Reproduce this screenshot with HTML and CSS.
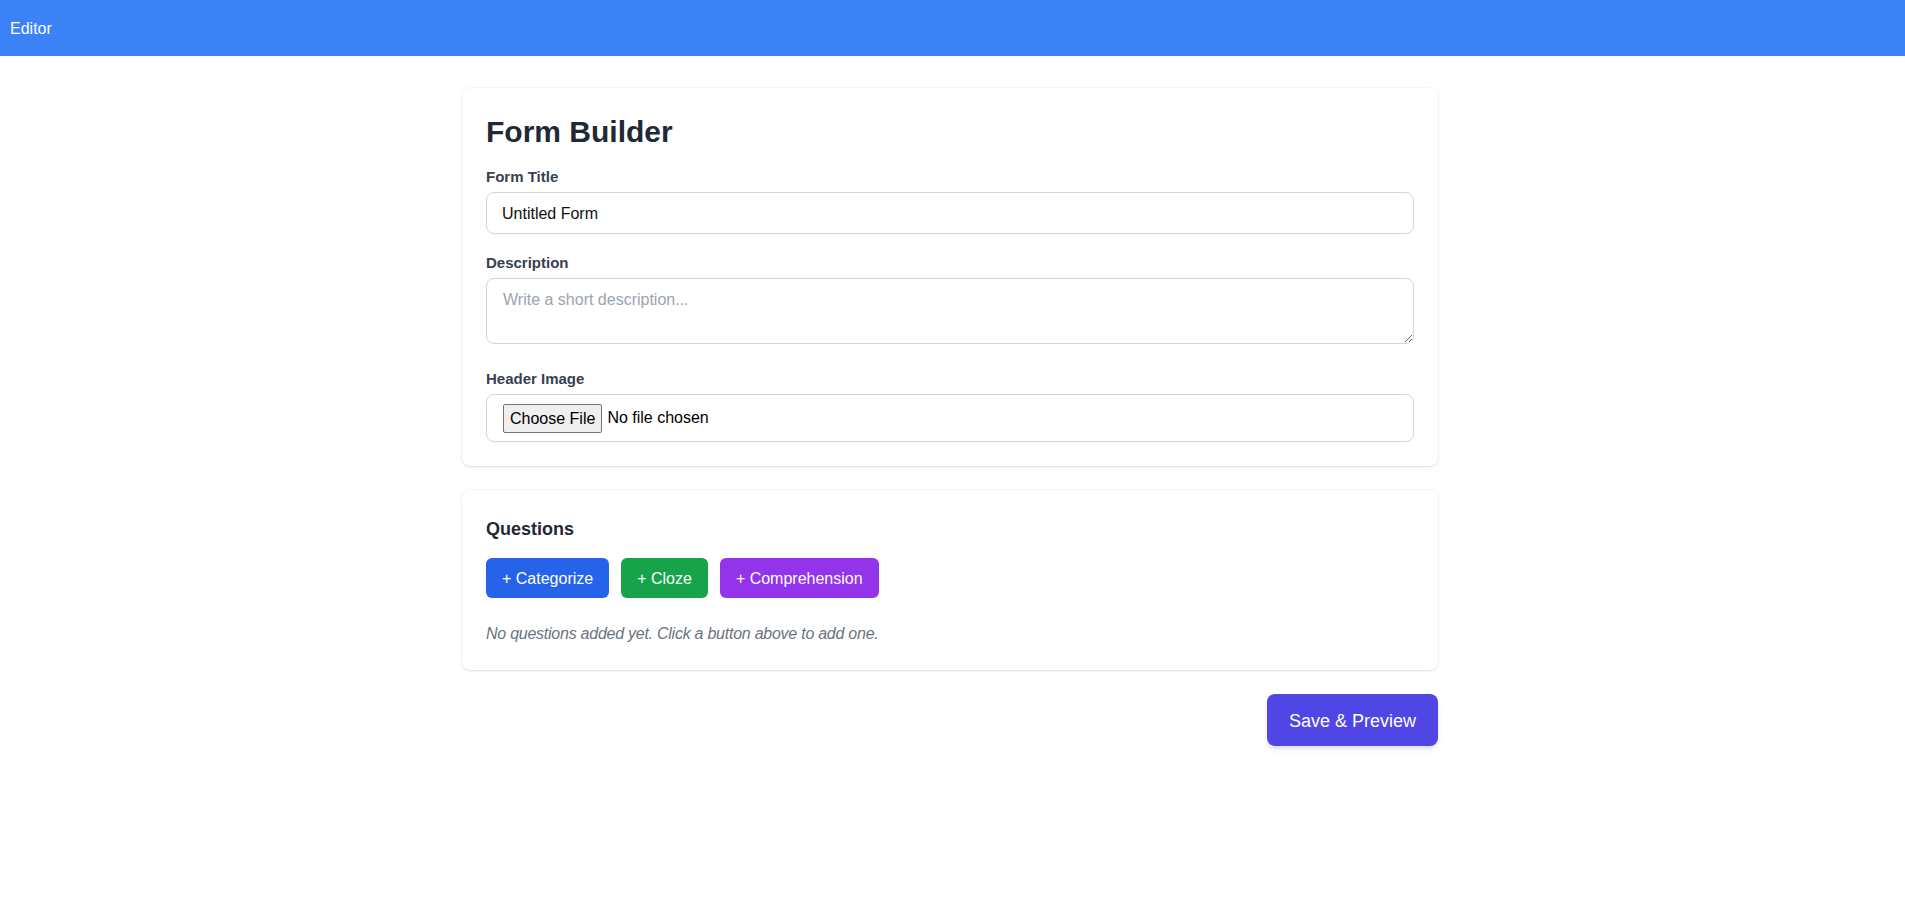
FILE: index.html
```html
<!DOCTYPE html>
<html lang="en">
<head>
<meta charset="utf-8">
<title>Editor</title>
<link rel="stylesheet" href="styles.css">
</head>
<body>
<header class="topbar">Editor</header>
<main class="page">
  <div class="container">
    <section class="card">
      <h1 class="title">Form Builder</h1>
      <div class="field">
        <label class="label" for="ftitle">Form Title</label>
        <input id="ftitle" class="input" type="text" value="Untitled Form">
      </div>
      <div class="field">
        <label class="label" for="fdesc">Description</label>
        <textarea id="fdesc" class="input textarea" rows="2" placeholder="Write a short description..."></textarea>
      </div>
      <div class="field field-last">
        <label class="label" for="fimg">Header Image</label>
        <input id="fimg" class="input file-input" type="file">
      </div>
    </section>

    <section class="card card-questions">
      <h2 class="subtitle">Questions</h2>
      <div class="btn-row">
        <button class="btn btn-blue" type="button">+ Categorize</button>
        <button class="btn btn-green" type="button">+ Cloze</button>
        <button class="btn btn-purple" type="button">+ Comprehension</button>
      </div>
      <p class="empty">No questions added yet. Click a button above to add one.</p>
    </section>

    <div class="actions">
      <button class="save-btn" type="button">Save &amp; Preview</button>
    </div>
  </div>
</main>
</body>
</html>
```
FILE: styles.css
```css
* { box-sizing: border-box; }
html, body { margin: 0; padding: 0; }
body {
  font-family: "Liberation Sans", Arial, sans-serif;
  font-size: 16px;
  line-height: 24px;
  color: #1f2937;
  background: #ffffff;
}
.topbar {
  background: #3b82f6;
  color: #ffffff;
  height: 56px;
  padding: 17px 10px 15px;
  font-size: 16px;
  line-height: 24px;
}
.page {
  padding: 32px 5px 40px 0;
}
.container {
  width: 976px;
  margin: 0 auto;
}
.card {
  background: #ffffff;
  border-radius: 8px;
  padding: 24px;
  box-shadow: 0 0 0 1px rgba(0,0,0,0.025), 0 1px 3px 0 rgba(0,0,0,0.09), 0 1px 2px -1px rgba(0,0,0,0.08);
}
.card-questions { margin-top: 24px; }
.title {
  margin: 0 0 16px 0;
  padding-top: 2px;
  font-size: 30px;
  line-height: 36px;
  font-weight: 700;
  color: #1f2937;
}
.field { margin-bottom: 18px; }
.field-last { margin-bottom: 0; }
.field:nth-child(3) { margin-bottom: 24px; }
.label {
  display: block;
  margin-bottom: 5px;
  padding-top: 1px;
  font-size: 15px;
  line-height: 20px;
  font-weight: 700;
  color: #374151;
}
.input {
  display: block;
  width: 100%;
  height: 42px;
  margin: 0;
  padding: 9px 15px 7px;
  border: 1px solid #d1d5db;
  border-radius: 8px;
  font-family: inherit;
  font-size: 16px;
  line-height: 24px;
  color: #111111;
  background: #ffffff;
  outline: none;
}
.textarea {
  height: 66px;
  padding: 9px 16px 7px;
  resize: vertical;
}
.textarea::placeholder { color: #9ca3af; opacity: 1; }
.file-input {
  height: 48px;
  padding: 8px 16px;
  line-height: 30px;
  color: #000000;
}
.file-input::file-selector-button {
  height: 29px;
  margin: 0 5px 0 0;
  padding: 1px 6px 0;
  font-family: inherit;
  font-size: 16px;
  line-height: 26px;
  color: #000000;
  background: #efefef;
  border: 1px solid #767676;
  border-radius: 2px;
  vertical-align: middle;
}
.subtitle {
  margin: 0 0 15px 0;
  padding-top: 1px;
  font-size: 18px;
  line-height: 28px;
  font-weight: 700;
  color: #1f2937;
}
.btn-row {
  display: flex;
  gap: 12px;
}
.btn {
  height: 40px;
  padding: 9px 16px 7px;
  border: none;
  border-radius: 6px;
  font-family: inherit;
  font-size: 16px;
  line-height: 24px;
  color: #ffffff;
  cursor: pointer;
}
.btn-blue { background: #2563eb; }
.btn-green { background: #16a34a; }
.btn-purple { background: #9333ea; }
.empty {
  margin: 23px 0 0 0;
  padding-top: 1px;
  font-size: 16px;
  line-height: 24px;
  font-style: italic;
  letter-spacing: -0.25px;
  color: #6b7280;
}
.actions {
  display: flex;
  justify-content: flex-end;
  margin-top: 24px;
}
.save-btn {
  height: 52px;
  padding: 13px 22px 11px;
  border: none;
  border-radius: 8px;
  background: #4f46e5;
  color: #ffffff;
  font-family: inherit;
  font-size: 18px;
  line-height: 28px;
  box-shadow: 0 4px 6px -1px rgba(0,0,0,0.1), 0 2px 4px -2px rgba(0,0,0,0.1);
  cursor: pointer;
}
```
